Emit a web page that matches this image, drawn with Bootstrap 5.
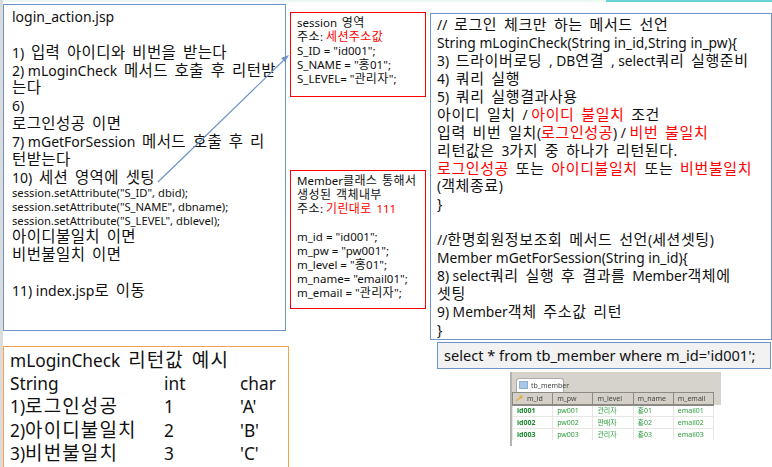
<!DOCTYPE html>
<html lang="ko"><head><meta charset="utf-8">
<link href="https://cdn.jsdelivr.net/npm/bootstrap@5.3.0/dist/css/bootstrap.min.css" rel="stylesheet">
<style>
html,body{margin:0;height:467px;overflow:hidden;background:#fff}
.slide{position:relative;width:772px;height:467px;overflow:hidden;font-family:"Noto Sans","Noto Sans CJK KR",sans-serif;color:#111}
.shape{position:absolute;background:#fff;border:1.5px solid #6f94c8;white-space:nowrap}
.topbar{position:absolute;left:0;top:0;width:772px;height:2px;background:#eef8f2}
.topteal{position:absolute;left:606px;top:0;width:166px;height:2px;background:#6ad2d2}
.leftbar{position:absolute;left:0;top:0;width:3px;height:467px;background:#dcdcdc}
.ko{font-family:"Liberation Sans","Noto Sans CJK KR",sans-serif;font-style:normal;line-height:1;font-size:15.5px;letter-spacing:.4px;word-spacing:2px}
.login{left:3px;top:4px;width:283px;height:327px;padding:3px 8px;font-size:14px;line-height:17.85px}
.login .tiny{font-size:11.2px;line-height:14px}
.sess,.memb{border-color:#f00;font-size:11.5px;line-height:14px;padding:3px 6px;width:136px}
.sess .ko,.memb .ko{font-size:12px;letter-spacing:.4px;word-spacing:1px}
.sess{left:290px;top:12px;height:85px}
.memb{left:290px;top:170px;height:139px}
.logic{left:430px;top:13px;width:342px;height:327px;padding:2px 6px;font-size:13.8px;line-height:17.93px}
.logic .ko{font-size:15px;letter-spacing:.6px;word-spacing:2px}
.sql{left:437px;top:342px;width:334px;height:27px;background:#f2f2f2;font-size:14.6px;line-height:24px;padding:0 6px}
.ret{left:3px;top:346px;width:286px;height:125px;border-color:#f9a04e;padding:2px 6px;font-size:17.3px;line-height:23.2px}
.ret .ko{font-size:19px;letter-spacing:1.1px;word-spacing:1.5px}
.hot{color:#f00}
.colwide{width:154px}
.colmid{width:76px}
.arrow{position:absolute;left:0;top:0;pointer-events:none}
.pic{position:absolute;left:510px;top:372px;width:211px;height:74px;background:#d6d3cc;overflow:hidden;font-size:7px;color:#444;filter:blur(.6px)}
.picedge{position:absolute;left:0;top:0;width:2px;height:74px;background:#b5b3ad}
.pictab{position:absolute;left:6px;top:6px;width:48px;height:14px;padding:1px 0 0 14px;background:#fff;border:1px solid #aaa;border-bottom:0;border-radius:3px 3px 0 0;line-height:11px}
.picicon{position:absolute;left:9px;top:9px;width:9px;height:8px;background:#a9c8e8;border:1px solid #8fb0d0}
.picgrid{position:absolute;left:2px;top:20px;width:202px;border-collapse:collapse;table-layout:fixed}
.picgrid th{background:#d4d0c8;border:1px solid #8c8a84;border-bottom-width:2px;font-weight:400;height:12px;line-height:9px;padding:0 4px}
.picgrid td{background:#fff;color:#2f9e3f;border:1px solid #e6e6e2;height:12px;line-height:9px;padding:0 4px;white-space:nowrap}
.picgrid td:first-child{font-weight:700;color:#1a8a2c}
.picgrid th:first-child{padding-left:14px}
.pickey{position:absolute;left:5px;top:23px}
.picfill{position:absolute;left:2px;top:68px;width:209px;height:6px;background:#fff}
.picwhite{position:absolute;left:204px;top:33px;width:7px;height:41px;background:#fff}
</style></head><body>
<div class="slide">
 <div class="topbar"></div><div class="topteal"></div><div class="leftbar"></div>
 <div class="shape login">
  <div>login_action.jsp</div><div>&nbsp;</div>
  <div>1) 입력 아이디와 비번을 받는다</div>
  <div>2) mLoginCheck 메서드 호출 후 리턴받</div><div>는다</div>
  <div>6)</div><div>로그인성공 이면</div>
  <div>7) mGetForSession 메서드 호출 후 리</div><div>턴받는다</div>
  <div>10) 세션 영역에 셋팅</div>
  <div class="tiny">session.setAttribute("S_ID", dbid);</div>
  <div class="tiny">session.setAttribute("S_NAME", dbname);</div>
  <div class="tiny">session.setAttribute("S_LEVEL", dblevel);</div>
  <div>아이디불일치 이면</div><div>비번불일치 이면</div><div>&nbsp;</div>
  <div>11) index.jsp로 이동</div>
 </div>
 <div class="shape sess">
  <div>session 영역</div><div>주소: <span class="hot">세션주소값</span></div>
  <div>S_ID = "id001";</div><div>S_NAME = "홍01";</div><div>S_LEVEL= "관리자";</div>
 </div>
 <div class="shape memb">
  <div>Member클래스 통해서</div><div>생성된 객체내부</div><div>주소: <span class="hot">기린대로 111</span></div><div>&nbsp;</div>
  <div>m_id = "id001";</div><div>m_pw = "pw001";</div><div>m_level = "홍01";</div><div>m_name= "email01";</div><div>m_email = "관리자";</div>
 </div>
 <div class="shape logic">
  <div>// 로그인 체크만 하는 메서드 선언</div>
  <div>String mLoginCheck(String in_id,String in_pw){</div>
  <div>3) 드라이버로딩 , DB연결 , select쿼리 실행준비</div>
  <div>4) 쿼리 실행</div>
  <div>5) 쿼리 실행결과사용</div>
  <div>아이디 일치 / <span class="hot">아이디 불일치</span> 조건</div>
  <div>입력 비번 일치(<span class="hot">로그인성공</span>) / <span class="hot">비번 불일치</span></div>
  <div>리턴값은 3가지 중 하나가 리턴된다.</div>
  <div><span class="hot">로그인성공</span> 또는 <span class="hot">아이디불일치</span> 또는 <span class="hot">비번불일치</span></div>
  <div>(객체종료)</div><div>}</div><div>&nbsp;</div>
  <div>//한명회원정보조회 메서드 선언(세션셋팅)</div>
  <div>Member mGetForSession(String in_id){</div>
  <div>8) select쿼리 실행 후 결과를 Member객체에</div><div>셋팅</div>
  <div>9) Member객체 주소값 리턴</div><div>}</div>
 </div>
 <div class="shape sql">select * from tb_member where m_id='id001';</div>
 <div class="shape ret">
  <div>mLoginCheck 리턴값 예시</div>
  <div class="d-flex"><span class="colwide">String</span><span class="colmid">int</span><span>char</span></div>
  <div class="d-flex"><span class="colwide">1)로그인성공</span><span class="colmid">1</span><span>'A'</span></div>
  <div class="d-flex"><span class="colwide">2)아이디불일치</span><span class="colmid">2</span><span>'B'</span></div>
  <div class="d-flex"><span class="colwide">3)비번불일치</span><span class="colmid">3</span><span>'C'</span></div>
 </div>
 <div class="pic">
  <div class="picedge"></div>
  <div class="pictab">tb_member</div><div class="picicon"></div>
  <table class="picgrid">
   <tr><th>m_id</th><th>m_pw</th><th>m_level</th><th>m_name</th><th>m_email</th></tr>
   <tr><td>id001</td><td>pw001</td><td>관리자</td><td>홍01</td><td>email01</td></tr>
   <tr><td>id002</td><td>pw002</td><td>판매자</td><td>홍02</td><td>email02</td></tr>
   <tr><td>id003</td><td>pw003</td><td>관리자</td><td>홍03</td><td>email03</td></tr>
  </table>
  <svg class="pickey" width="8" height="7" viewBox="0 0 8 7"><circle cx="6" cy="2" r="1.7" fill="#e0b040"/><path d="M5 3 L1 6" stroke="#e0b040" stroke-width="1.3"/></svg>
  <div class="picfill"></div><div class="picwhite"></div>
 </div>
 <svg class="arrow" width="772" height="467" viewBox="0 0 772 467">
  <line x1="158" y1="182" x2="286" y2="58" stroke="#6f94c8" stroke-width="1.2"/>
  <path d="M289 55 L281 58 L285 62 Z" fill="#6f94c8"/>
 </svg>
</div>
<script src="https://cdn.jsdelivr.net/npm/bootstrap@5.3.0/dist/js/bootstrap.bundle.min.js"></script>
<script>
// Hangul is set larger than Latin in the reference: wrap each Hangul run so it can take its own size.
const walker=document.createTreeWalker(document.querySelector('.slide'),NodeFilter.SHOW_TEXT);
const nodes=[];while(walker.nextNode()){if(!walker.currentNode.parentElement.closest('.pic')&&/[가-힣]/.test(walker.currentNode.data))nodes.push(walker.currentNode);}
nodes.forEach(n=>{const t=document.createElement('template');
 t.innerHTML=n.data.replace(/\s*[가-힣]+(?:\s+[가-힣]+)*\s*/g,m=>'<i class="ko">'+m+'</i>');n.replaceWith(t.content);});
</script>
</body></html>
